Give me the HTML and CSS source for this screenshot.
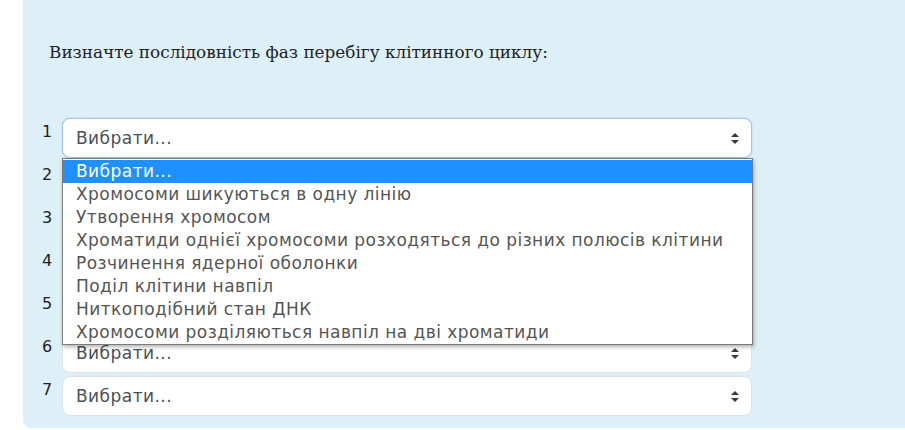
FILE: index.html
```html
<!DOCTYPE html>
<html lang="uk">
<head>
    <meta charset="UTF-8">
    <title>Послідовність фаз</title>
    <link rel="stylesheet" href="styles.css">
</head>
<body>
    <div class="page">
        <div class="formulation">
            <p class="qtext">Визначте послідовність фаз перебігу клітинного циклу:</p>
            <div class="answers">
                <div class="row">
                    <span class="num">1</span>
                    <div class="select focused">
                        <span>Вибрати...</span>
                        <svg class="arrows" width="8" height="11" viewBox="0 0 8 11"><path d="M4 0 L8 4 H0 Z M4 11 L8 7 H0 Z" fill="#343a40"/></svg>
                    </div>
                    <ul class="dropdown">
                        <li class="active">Вибрати...</li>
                        <li>Хромосоми шикуються в одну лінію</li>
                        <li>Утворення хромосом</li>
                        <li>Хроматиди однієї хромосоми розходяться до різних полюсів клітини</li>
                        <li>Розчинення ядерної оболонки</li>
                        <li>Поділ клітини навпіл</li>
                        <li>Ниткоподібний стан ДНК</li>
                        <li>Хромосоми розділяються навпіл на дві хроматиди</li>
                    </ul>
                </div>
                <div class="row">
                    <span class="num">2</span>
                    <div class="select"><span>Вибрати...</span><svg class="arrows" width="8" height="11" viewBox="0 0 8 11"><path d="M4 0 L8 4 H0 Z M4 11 L8 7 H0 Z" fill="#343a40"/></svg></div>
                </div>
                <div class="row">
                    <span class="num">3</span>
                    <div class="select"><span>Вибрати...</span><svg class="arrows" width="8" height="11" viewBox="0 0 8 11"><path d="M4 0 L8 4 H0 Z M4 11 L8 7 H0 Z" fill="#343a40"/></svg></div>
                </div>
                <div class="row">
                    <span class="num">4</span>
                    <div class="select"><span>Вибрати...</span><svg class="arrows" width="8" height="11" viewBox="0 0 8 11"><path d="M4 0 L8 4 H0 Z M4 11 L8 7 H0 Z" fill="#343a40"/></svg></div>
                </div>
                <div class="row">
                    <span class="num">5</span>
                    <div class="select"><span>Вибрати...</span><svg class="arrows" width="8" height="11" viewBox="0 0 8 11"><path d="M4 0 L8 4 H0 Z M4 11 L8 7 H0 Z" fill="#343a40"/></svg></div>
                </div>
                <div class="row">
                    <span class="num">6</span>
                    <div class="select"><span>Вибрати...</span><svg class="arrows" width="8" height="11" viewBox="0 0 8 11"><path d="M4 0 L8 4 H0 Z M4 11 L8 7 H0 Z" fill="#343a40"/></svg></div>
                </div>
                <div class="row">
                    <span class="num">7</span>
                    <div class="select"><span>Вибрати...</span><svg class="arrows" width="8" height="11" viewBox="0 0 8 11"><path d="M4 0 L8 4 H0 Z M4 11 L8 7 H0 Z" fill="#343a40"/></svg></div>
                </div>
            </div>
        </div>
    </div>
</body>
</html>
```
FILE: styles.css
```css
body {
    margin: 0;
    background-color: #ffffff;
    font-family: 'DejaVu Sans', sans-serif;
}

.page {
    padding-left: 23px;
}

.formulation {
    background-color: #def0f7;
    border-bottom-left-radius: 8px;
    padding: 41px 0 10px 26px;
    height: 377px;
}

.qtext {
    margin: 0;
    font-family: 'DejaVu Serif', serif;
    font-size: 16.85px;
    line-height: 22px;
    color: #1d2125;
}

.answers {
    margin-top: 55px;
    margin-left: -9px;
}

.row {
    position: relative;
    display: flex;
    align-items: flex-start;
    margin-bottom: 3px;
}

.num {
    width: 22px;
    padding-top: 4px;
    padding-left: 2px;
    box-sizing: border-box;
    font-size: 16px;
    color: #1d2125;
}

.select {
    box-sizing: border-box;
    width: 690px;
    height: 40px;
    display: flex;
    align-items: center;
    justify-content: space-between;
    padding: 0 12px 0 13px;
    background-color: #fff;
    border: 1px solid #dee2e6;
    border-radius: 8px;
    font-size: 17px;
    letter-spacing: 0.45px;
    color: #495057;
}

.select.focused {
    border-color: #a3c2ef;
    box-shadow: 0 0 2px rgba(15, 108, 191, 0.25);
}

.dropdown {
    position: absolute;
    left: 22px;
    top: 40px;
    z-index: 5;
    width: 691px;
    margin: 0;
    padding: 1px 0 0;
    list-style: none;
    box-sizing: border-box;
    background-color: #fff;
    border: 1px solid #7a7a7a;
    box-shadow: 1px 2px 4px rgba(0, 0, 0, 0.3);
    font-size: 17px;
    letter-spacing: 0.45px;
    color: #555;
}

.dropdown li {
    height: 23px;
    line-height: 23px;
    padding-left: 13px;
    white-space: nowrap;
}

.dropdown li.active {
    background-color: #1e90ff;
    color: #fff;
}
```
